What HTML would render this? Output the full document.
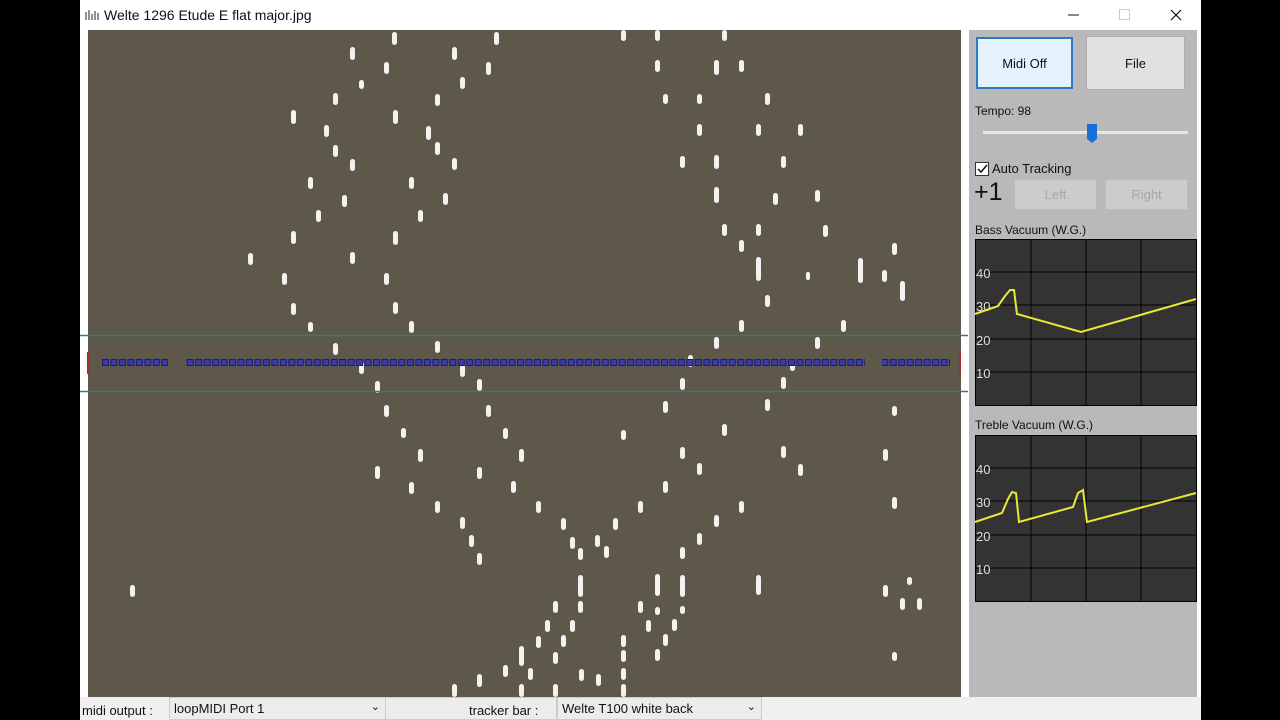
<!DOCTYPE html>
<html><head><meta charset="utf-8"><style>
*{margin:0;padding:0;box-sizing:border-box}
body{width:1280px;height:720px;background:#000;position:relative;overflow:hidden;font-family:"Liberation Sans",sans-serif}
.abs{position:absolute}
.win{left:80px;top:0;width:1121px;height:720px;background:#fff}
.title{left:104px;top:7px;font-size:14px;color:#111}
.panel{left:969px;top:30px;width:228px;height:667px;background:#b9b9b9}
.btn{position:absolute;background:#e1e1e1;border:1px solid #adadad;font-size:13px;color:#111;display:flex;align-items:center;justify-content:center}
.lbl{position:absolute;font-size:12px;color:#111}
.bot{left:80px;top:697px;width:1121px;height:23px;background:#f0f0f0;font-size:13px;color:#111}
.combo{position:absolute;top:0;height:23px;background:#ececec;border:1px solid #ccc;padding:3px 4px;font-size:13px}
</style></head><body>
<div class="abs win"></div>
<svg class="abs" style="left:84px;top:8px" width="16" height="14"><path d="M2 4v8M5 2v10M8 6v6M11 3v9M14 5v7" stroke="#555" stroke-width="1.3"/></svg>
<div class="abs title">Welte 1296 Etude E flat major.jpg</div>
<svg class="abs" style="left:1060px;top:6px" width="130" height="20"><path d="M8 9h11" stroke="#111"/><rect x="59.5" y="3.5" width="10" height="10" fill="none" stroke="#ccc"/><path d="M111 4l10 10M121 4l-10 10" stroke="#111" stroke-width="1.2"/></svg>
<svg class="abs" style="left:0;top:0" width="1280" height="720">
<rect x="88" y="30" width="873" height="667" fill="#5d5849"/>
</svg>
<svg class="abs" style="left:0;top:0" width="1280" height="720">
<defs><pattern id="sq" x="102" y="359" width="8.47" height="9" patternUnits="userSpaceOnUse"><rect x="0.5" y="0.5" width="6" height="6" fill="#3a3ab0" stroke="#1a1a70"/></pattern></defs>
<g fill="#f4f2ee">
<rect x="392" y="32" width="5" height="13" rx="2.5"/><rect x="494" y="32" width="5" height="13" rx="2.5"/><rect x="621" y="30" width="5" height="11" rx="2.5"/><rect x="655" y="30" width="5" height="11" rx="2.5"/><rect x="722" y="30" width="5" height="11" rx="2.5"/>
<rect x="350" y="47" width="5" height="13" rx="2.5"/><rect x="452" y="47" width="5" height="13" rx="2.5"/><rect x="384" y="62" width="5" height="12" rx="2.5"/><rect x="486" y="62" width="5" height="13" rx="2.5"/><rect x="655" y="60" width="5" height="12" rx="2.5"/><rect x="714" y="60" width="5" height="15" rx="2.5"/><rect x="739" y="60" width="5" height="12" rx="2.5"/>
<rect x="359" y="80" width="5" height="9" rx="2.5"/><rect x="460" y="77" width="5" height="12" rx="2.5"/><rect x="333" y="93" width="5" height="12" rx="2.5"/><rect x="435" y="94" width="5" height="12" rx="2.5"/><rect x="663" y="94" width="5" height="10" rx="2.5"/><rect x="697" y="94" width="5" height="10" rx="2.5"/><rect x="765" y="93" width="5" height="12" rx="2.5"/>
<rect x="291" y="110" width="5" height="14" rx="2.5"/><rect x="393" y="110" width="5" height="14" rx="2.5"/><rect x="324" y="125" width="5" height="12" rx="2.5"/><rect x="426" y="126" width="5" height="14" rx="2.5"/><rect x="697" y="124" width="5" height="12" rx="2.5"/><rect x="756" y="124" width="5" height="12" rx="2.5"/><rect x="798" y="124" width="5" height="12" rx="2.5"/>
<rect x="333" y="145" width="5" height="12" rx="2.5"/><rect x="435" y="142" width="5" height="13" rx="2.5"/><rect x="350" y="159" width="5" height="12" rx="2.5"/><rect x="452" y="158" width="5" height="12" rx="2.5"/><rect x="680" y="156" width="5" height="12" rx="2.5"/><rect x="714" y="155" width="5" height="14" rx="2.5"/><rect x="781" y="156" width="5" height="12" rx="2.5"/>
<rect x="308" y="177" width="5" height="12" rx="2.5"/><rect x="409" y="177" width="5" height="12" rx="2.5"/><rect x="342" y="195" width="5" height="12" rx="2.5"/><rect x="443" y="193" width="5" height="12" rx="2.5"/><rect x="714" y="187" width="5" height="16" rx="2.5"/><rect x="773" y="193" width="5" height="12" rx="2.5"/><rect x="815" y="190" width="5" height="12" rx="2.5"/>
<rect x="316" y="210" width="5" height="12" rx="2.5"/><rect x="418" y="210" width="5" height="12" rx="2.5"/><rect x="722" y="224" width="5" height="12" rx="2.5"/><rect x="756" y="224" width="5" height="12" rx="2.5"/><rect x="823" y="225" width="5" height="12" rx="2.5"/>
<rect x="291" y="231" width="5" height="13" rx="2.5"/><rect x="393" y="231" width="5" height="14" rx="2.5"/><rect x="248" y="253" width="5" height="12" rx="2.5"/><rect x="350" y="252" width="5" height="12" rx="2.5"/><rect x="739" y="240" width="5" height="12" rx="2.5"/><rect x="892" y="243" width="5" height="12" rx="2.5"/>
<rect x="282" y="273" width="5" height="12" rx="2.5"/><rect x="384" y="273" width="5" height="12" rx="2.5"/><rect x="756" y="257" width="5" height="24" rx="2.5"/><rect x="858" y="258" width="5" height="25" rx="2.5"/><rect x="882" y="270" width="5" height="12" rx="2.5"/><rect x="900" y="281" width="5" height="20" rx="2.5"/><rect x="806" y="272" width="4" height="8" rx="2"/>
<rect x="291" y="303" width="5" height="12" rx="2.5"/><rect x="393" y="302" width="5" height="12" rx="2.5"/><rect x="765" y="295" width="5" height="12" rx="2.5"/><rect x="308" y="322" width="5" height="10" rx="2.5"/><rect x="409" y="321" width="5" height="12" rx="2.5"/><rect x="739" y="320" width="5" height="12" rx="2.5"/><rect x="841" y="320" width="5" height="12" rx="2.5"/>
<rect x="333" y="343" width="5" height="12" rx="2.5"/><rect x="435" y="341" width="5" height="12" rx="2.5"/><rect x="714" y="337" width="5" height="12" rx="2.5"/><rect x="815" y="337" width="5" height="12" rx="2.5"/>
<rect x="359" y="362" width="5" height="12" rx="2.5"/><rect x="460" y="365" width="5" height="12" rx="2.5"/><rect x="688" y="355" width="5" height="12" rx="2.5"/><rect x="790" y="359" width="5" height="12" rx="2.5"/>
<rect x="375" y="381" width="5" height="12" rx="2.5"/><rect x="477" y="379" width="5" height="12" rx="2.5"/><rect x="680" y="378" width="5" height="12" rx="2.5"/><rect x="781" y="377" width="5" height="12" rx="2.5"/>
<rect x="384" y="405" width="5" height="12" rx="2.5"/><rect x="486" y="405" width="5" height="12" rx="2.5"/><rect x="663" y="401" width="5" height="12" rx="2.5"/><rect x="765" y="399" width="5" height="12" rx="2.5"/><rect x="892" y="406" width="5" height="10" rx="2.5"/>
<rect x="401" y="428" width="5" height="10" rx="2.5"/><rect x="503" y="428" width="5" height="11" rx="2.5"/><rect x="621" y="430" width="5" height="10" rx="2.5"/><rect x="722" y="424" width="5" height="12" rx="2.5"/>
<rect x="418" y="449" width="5" height="13" rx="2.5"/><rect x="519" y="449" width="5" height="13" rx="2.5"/><rect x="680" y="447" width="5" height="12" rx="2.5"/><rect x="781" y="446" width="5" height="12" rx="2.5"/><rect x="883" y="449" width="5" height="12" rx="2.5"/>
<rect x="375" y="466" width="5" height="13" rx="2.5"/><rect x="477" y="467" width="5" height="12" rx="2.5"/><rect x="697" y="463" width="5" height="12" rx="2.5"/><rect x="798" y="464" width="5" height="12" rx="2.5"/>
<rect x="409" y="482" width="5" height="12" rx="2.5"/><rect x="511" y="481" width="5" height="12" rx="2.5"/><rect x="663" y="481" width="5" height="12" rx="2.5"/><rect x="435" y="501" width="5" height="12" rx="2.5"/><rect x="536" y="501" width="5" height="12" rx="2.5"/><rect x="739" y="501" width="5" height="12" rx="2.5"/><rect x="892" y="497" width="5" height="12" rx="2.5"/><rect x="638" y="501" width="5" height="12" rx="2.5"/>
<rect x="460" y="517" width="5" height="12" rx="2.5"/><rect x="561" y="518" width="5" height="12" rx="2.5"/><rect x="613" y="518" width="5" height="12" rx="2.5"/><rect x="714" y="515" width="5" height="12" rx="2.5"/>
<rect x="469" y="535" width="5" height="12" rx="2.5"/><rect x="570" y="537" width="5" height="12" rx="2.5"/><rect x="595" y="535" width="5" height="12" rx="2.5"/><rect x="697" y="533" width="5" height="12" rx="2.5"/>
<rect x="477" y="553" width="5" height="12" rx="2.5"/><rect x="578" y="548" width="5" height="12" rx="2.5"/><rect x="604" y="546" width="5" height="12" rx="2.5"/><rect x="680" y="547" width="5" height="12" rx="2.5"/>
<rect x="130" y="585" width="5" height="12" rx="2.5"/><rect x="578" y="575" width="5" height="22" rx="2.5"/><rect x="655" y="574" width="5" height="22" rx="2.5"/><rect x="680" y="575" width="5" height="22" rx="2.5"/><rect x="756" y="575" width="5" height="20" rx="2.5"/><rect x="883" y="585" width="5" height="12" rx="2.5"/><rect x="900" y="598" width="5" height="12" rx="2.5"/><rect x="917" y="598" width="5" height="12" rx="2.5"/><rect x="907" y="577" width="5" height="8" rx="2.5"/>
<rect x="553" y="601" width="5" height="12" rx="2.5"/><rect x="578" y="601" width="5" height="12" rx="2.5"/><rect x="638" y="601" width="5" height="12" rx="2.5"/><rect x="655" y="607" width="5" height="8" rx="2.5"/><rect x="680" y="606" width="5" height="8" rx="2.5"/>
<rect x="545" y="620" width="5" height="12" rx="2.5"/><rect x="570" y="620" width="5" height="12" rx="2.5"/><rect x="646" y="620" width="5" height="12" rx="2.5"/><rect x="672" y="619" width="5" height="12" rx="2.5"/>
<rect x="536" y="636" width="5" height="12" rx="2.5"/><rect x="561" y="635" width="5" height="12" rx="2.5"/><rect x="621" y="635" width="5" height="12" rx="2.5"/><rect x="663" y="634" width="5" height="12" rx="2.5"/>
<rect x="519" y="646" width="5" height="20" rx="2.5"/><rect x="553" y="652" width="5" height="12" rx="2.5"/><rect x="621" y="650" width="5" height="12" rx="2.5"/><rect x="655" y="649" width="5" height="12" rx="2.5"/><rect x="892" y="652" width="5" height="9" rx="2.5"/>
<rect x="503" y="665" width="5" height="12" rx="2.5"/><rect x="528" y="668" width="5" height="12" rx="2.5"/><rect x="579" y="669" width="5" height="12" rx="2.5"/><rect x="621" y="668" width="5" height="12" rx="2.5"/>
<rect x="452" y="684" width="5" height="13" rx="2.5"/><rect x="477" y="674" width="5" height="13" rx="2.5"/><rect x="519" y="684" width="5" height="13" rx="2.5"/><rect x="553" y="684" width="5" height="13" rx="2.5"/><rect x="621" y="684" width="5" height="13" rx="2.5"/><rect x="596" y="674" width="5" height="12" rx="2.5"/>
</g>
<path d="M80 335.5H968M80 391.5H968" stroke="#3a7a72" stroke-width="1.5"/>
<rect x="101" y="359" width="67" height="8" fill="url(#sq)"/>
<rect x="186" y="359" width="679" height="8" fill="url(#sq)"/>
<rect x="882" y="359" width="68" height="8" fill="url(#sq)"/>
<path d="M88 352v22M960 352v22" stroke="#a03030" stroke-width="2"/>
</svg>
<div class="abs panel"></div>
<div class="btn" style="left:976px;top:37px;width:97px;height:52px;border:2px solid #2a78c8;background:#e5f1fb">Midi Off</div>
<div class="btn" style="left:1086px;top:36px;width:99px;height:54px">File</div>
<div class="lbl" style="left:975px;top:104px">Tempo: 98</div>
<div class="abs" style="left:983px;top:131px;width:205px;height:3px;background:#e6e6e6"></div>
<svg class="abs" style="left:1086px;top:123px" width="12" height="22"><path d="M1 1h10v15l-5 4l-5-4z" fill="#1a6fd6"/></svg>
<div class="abs" style="left:975px;top:162px;width:14px;height:14px;background:#fff;border:1px solid #333"></div>
<svg class="abs" style="left:976px;top:163px" width="12" height="12"><path d="M2 6l3 3l6-7" stroke="#111" stroke-width="1.5" fill="none"/></svg>
<div class="lbl" style="left:992px;top:161px;font-size:13px">Auto Tracking</div>
<div class="lbl" style="left:974px;top:178px;font-size:25px">+1</div>
<div class="btn" style="left:1014px;top:179px;width:83px;height:31px;color:#a8a8a8;background:#cccccc;border-color:#bcbcbc">Left</div>
<div class="btn" style="left:1105px;top:179px;width:83px;height:31px;color:#a8a8a8;background:#cccccc;border-color:#bcbcbc">Right</div>
<div class="lbl" style="left:975px;top:223px">Bass Vacuum (W.G.)</div>
<div class="lbl" style="left:975px;top:418px">Treble Vacuum (W.G.)</div>
<svg class="abs" style="left:0;top:0" width="1280" height="720">
<g fill="#333" stroke="#000"><rect x="975.5" y="239.5" width="221" height="166"/><rect x="975.5" y="435.5" width="221" height="166"/></g>
<path d="M1031 240v165M1086 240v165M1141 240v165M976 272H1196M976 305H1196M976 339H1196M976 372H1196M1031 436v165M1086 436v165M1141 436v165M976 468H1196M976 501H1196M976 535H1196M976 568H1196" stroke="#000" stroke-width="1"/>
<g fill="#ddd" font-size="13" font-family="Liberation Sans,sans-serif"><text x="976" y="278">40</text><text x="976" y="311">30</text><text x="976" y="345">20</text><text x="976" y="378">10</text><text x="976" y="474">40</text><text x="976" y="507">30</text><text x="976" y="541">20</text><text x="976" y="574">10</text></g>
<polyline points="975,314 998,306 1005,296 1010,290 1014,290 1017,314 1081,332 1196,299" fill="none" stroke="#e8e83a" stroke-width="2"/>
<polyline points="975,522 1002,513 1008,499 1012,492 1016,493 1019,522 1073,507 1078,493 1083,490 1087,522 1196,493" fill="none" stroke="#e8e83a" stroke-width="2"/>
</svg>
<div class="abs bot">
<div class="lbl" style="left:2px;top:6px;font-size:13px">midi output :</div>
<div class="combo" style="left:89px;width:217px">loopMIDI Port 1<span style="position:absolute;right:5px;top:2px;font-size:11px">&#8964;</span></div>
<div class="combo" style="left:306px;width:171px;border-left:none"></div>
<div class="lbl" style="left:389px;top:6px;font-size:13px">tracker bar :</div>
<div class="combo" style="left:477px;width:205px">Welte T100 white back<span style="position:absolute;right:5px;top:2px;font-size:11px">&#8964;</span></div>
</div>
</body></html>
